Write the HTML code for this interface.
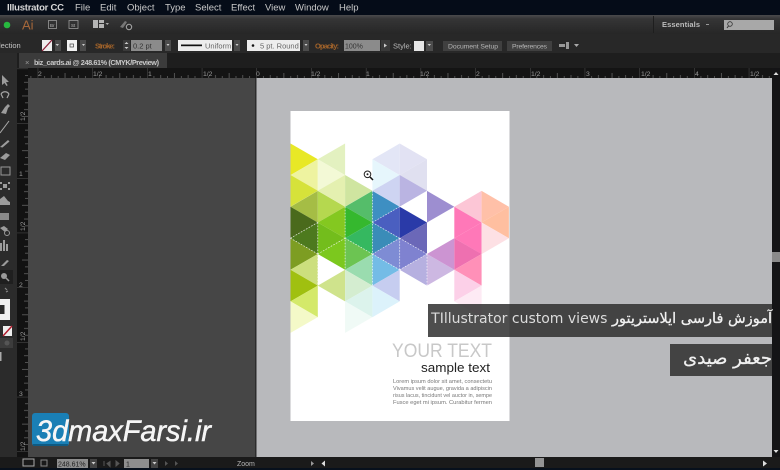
<!DOCTYPE html>
<html><head><meta charset="utf-8"><style>
html,body{margin:0;padding:0;background:#111}
#w{position:relative;width:780px;height:470px;overflow:hidden}
svg{position:absolute;left:0;top:0;display:block;filter:blur(.35px)}
svg text{font-family:"Liberation Sans",sans-serif}
.b{position:absolute;background:rgba(44,44,44,.84);color:#f0f0f0;font-family:"DejaVu Sans",sans-serif;direction:rtl;text-align:right;white-space:nowrap;overflow:visible;filter:blur(.25px)}
.a{-webkit-text-stroke:.3px #f0f0f0}
.l{font-size:14px;color:#dcdcdc;-webkit-text-stroke:0}
</style></head><body><div id="w">
<svg width="780" height="470" viewBox="0 0 780 470">
<defs>
<linearGradient id="g1" x1="0" y1="0" x2="0" y2="1"><stop offset="0" stop-color="#4a4a4c"/><stop offset=".2" stop-color="#353536"/><stop offset="1" stop-color="#262626"/></linearGradient>
<pattern id="tt" width="54.7" height="10" patternUnits="userSpaceOnUse" patternTransform="translate(256.5 68)">
<path d="M0 0v10M27.35 5v5M6.84 8v2M13.68 7v3M20.5 8v2M34.2 8v2M41 7v3M47.9 8v2" stroke="#6a6a6a" stroke-width=".7"/></pattern>
<pattern id="tl" width="11" height="54.7" patternUnits="userSpaceOnUse" patternTransform="translate(17 178)">
<path d="M0 0h11M5 27.35h6M8 6.84h3M7 13.68h4M8 20.5h3M8 34.2h3M7 41h4M8 47.9h3" stroke="#666" stroke-width=".7"/></pattern>
</defs>

<!-- base regions -->
<rect width="780" height="15" fill="#050c18"/>
<rect y="15" width="780" height="19" fill="url(#g1)"/>
<rect y="34" width="780" height="19" fill="#282828"/>
<rect y="53" width="780" height="15" fill="#1e1e1e"/>
<rect y="68" width="780" height="10" fill="#141414"/>
<rect y="68" width="780" height="10" fill="url(#tt)"/>
<rect y="53" width="17" height="417" fill="#2b2b2b"/>
<rect x="17" y="68" width="11" height="390" fill="#121212"/>
<rect x="17" y="68" width="11" height="390" fill="url(#tl)"/>
<rect x="28" y="78" width="228" height="380" fill="#464646"/>
<rect x="255" y="78" width="1.5" height="380" fill="#2c2c2c"/>
<rect x="256.5" y="78" width="516" height="380" fill="#b8b9bc"/>
<rect x="772" y="68" width="8" height="402" fill="#141416"/>
<rect y="457" width="780" height="13" fill="#1a1a1a"/>
<rect y="468" width="780" height="2" fill="#07101c"/>

<!-- menu -->
<g font-size="9.5" fill="#c9c9c9">
<text x="7" y="10.5" font-weight="bold" fill="#d8d8d8" textLength="57">Illustrator CC</text>
<text x="75" y="10.5">File</text><text x="100" y="10.5">Edit</text><text x="127" y="10.5">Object</text><text x="165" y="10.5">Type</text><text x="195" y="10.5">Select</text><text x="231" y="10.5">Effect</text><text x="265" y="10.5">View</text><text x="295" y="10.5">Window</text><text x="339" y="10.5">Help</text>
</g>

<!-- app bar -->
<circle cx="7" cy="25" r="3.3" fill="#27b83f"/>
<text x="22" y="29.5" font-size="13" fill="#a5673a">Ai</text>
<g fill="none" stroke="#9a9a9a" stroke-width=".8"><rect x="48.5" y="20.5" width="8" height="8"/><rect x="69" y="20.5" width="9" height="8"/></g>
<text x="50" y="27" font-size="4.5" fill="#bbb">Br</text><text x="71" y="27" font-size="4.5" fill="#bbb">St</text>
<path d="M93 20h5v8h-5zM99 20h5v3h-5zM99 24h5v4h-5z" fill="#b5b5b5"/><path d="M105.500 23h3.500l-1.700 2z" fill="#aaa"/>
<path d="M120 27l5-6 2 1-4 6z" fill="#777"/><circle cx="129" cy="27" r="2.700" fill="none" stroke="#aaa"/>
<path d="M653.500 16v17" stroke="#1e1e1e"/>
<text x="662" y="27" font-size="7.500" font-weight="bold" fill="#bdbdbd" textLength="38">Essentials</text>
<path d="M706 24.500h3" stroke="#999"/>
<rect x="724" y="20" width="50" height="10" fill="#a8a8a8"/>
<circle cx="730" cy="24" r="2.300" fill="none" stroke="#333" stroke-width=".8"/><path d="M728.500 26l-1.500 2" stroke="#333"/>

<!-- control bar -->
<text x="-1" y="48" font-size="7.500" fill="#c4c4c4">lection</text>
<rect x="42" y="40" width="10" height="11" fill="#eee"/><path d="M42 51l10-11" stroke="#8c1f38" stroke-width="1.300"/>
<rect x="55" y="40" width="6" height="11" fill="#4a4a4a"/><rect x="67" y="40" width="10" height="11" fill="#f2f2f2"/><rect x="70" y="44" width="3.500" height="3" fill="none" stroke="#444" stroke-width=".7"/><rect x="80" y="40" width="6" height="11" fill="#4a4a4a"/>
<text x="95" y="48.500" font-size="7.500" font-weight="bold" fill="#a2632a" textLength="20">Stroke:</text>
<rect x="123" y="40" width="7" height="11" fill="#3a3a3a"/><path d="M124.500 44l2-2 2 2zM124.500 47l2 2 2-2z" fill="#ccc"/>
<rect x="131" y="40" width="31" height="11" fill="#8b8b8b"/><text x="133" y="48.500" font-size="7.500" fill="#333">0.2 pt</text>
<rect x="165" y="40" width="6" height="11" fill="#4c4c4c"/>
<rect x="178" y="40" width="54" height="11" fill="#ededed"/><rect x="181" y="44.500" width="21" height="1.700" fill="#111"/><text x="205" y="48.500" font-size="7.500" fill="#666">Uniform</text>
<rect x="234" y="40" width="6" height="11" fill="#4c4c4c"/>
<rect x="247" y="40" width="53" height="11" fill="#ededed"/><circle cx="253" cy="45.500" r="1.300" fill="#111"/><text x="260" y="48.500" font-size="7.500" fill="#666">5 pt. Round</text>
<rect x="303" y="40" width="6" height="11" fill="#4c4c4c"/>
<text x="315" y="48.500" font-size="7.500" font-weight="bold" fill="#a2632a" textLength="24">Opacity:</text>
<rect x="344" y="40" width="36" height="11" fill="#8b8b8b"/><text x="345" y="48.500" font-size="7" fill="#333">100%</text>
<rect x="381" y="40" width="9" height="11" fill="#3a3a3a"/><path d="M384 43.500l3 2-3 2z" fill="#ccc"/>
<text x="393" y="48.500" font-size="7.500" fill="#b8b8b8">Style:</text>
<rect x="414" y="41" width="10" height="10" fill="#e6e6e6"/><rect x="426" y="41" width="7" height="10" fill="#4c4c4c"/>
<rect x="443" y="41" width="59" height="10" fill="#404040"/><text x="448" y="48.500" font-size="6.800" fill="#b5b5b5" textLength="50">Document Setup</text>
<rect x="507" y="41" width="45" height="10" fill="#404040"/><text x="512" y="48.500" font-size="6.800" fill="#b5b5b5" textLength="35">Preferences</text>
<path d="M559 44h6v3h-6zM566 42h3v7h-3z" fill="#999"/><path d="M574 44h5l-2.500 3z" fill="#aaa"/>
<path d="M55.500 44h3.500l-1.700 2zM82 44h3l-1.500 2zM166.500 44h3l-1.500 2zM235.500 44h3l-1.500 2zM304.500 44h3l-1.500 2zM427.500 44h3.500l-1.700 2z" fill="#ccc"/>

<!-- tab -->
<rect x="19" y="53" width="148" height="15" fill="#3b3b3b"/>
<text x="25" y="65" font-size="7.500" fill="#999">×</text>
<text x="34" y="65" font-size="7.300" font-weight="bold" fill="#c8c8c8" textLength="125">biz_cards.ai @ 248.61% (CMYK/Preview)</text>

<!-- ruler labels -->
<g font-size="6.800" fill="#999">
<text x="38" y="76">2</text><text x="93" y="76">1/2</text><text x="148" y="76">1</text><text x="203" y="76">1/2</text><text x="256" y="76">0</text><text x="311" y="76">1/2</text><text x="366" y="76">1</text><text x="420" y="76">1/2</text><text x="476" y="76">2</text><text x="531" y="76">1/2</text><text x="586" y="76">3</text><text x="641" y="76">1/2</text><text x="695" y="76">4</text><text x="750" y="76">1/2</text>
<text x="19" y="176">1</text><text x="19" y="287">2</text><text x="19" y="396">3</text>
<text transform="translate(25 121) rotate(-90)">1/2</text><text transform="translate(25 231) rotate(-90)">1/2</text><text transform="translate(25 341) rotate(-90)">1/2</text><text transform="translate(25 451) rotate(-90)">1/2</text>
</g>

<!-- tools -->
<g fill="#9c9c9c" stroke="none">
<path d="M2 75l0 10 2.500-2 2 3 1.200-.8-1.800-3 3-.3z"/>
<path d="M1 94c2-3 6-3 8 0M1 94l2 4M9 94l-2 4" fill="none" stroke="#a5a5a5" stroke-width="1.200"/>
<path d="M1 113l4-6 3 1-2 6zM5 107l3-3 2 2-2 2z"/>
<path d="M0 133l9-12" stroke="#aaa" fill="none"/>
<path d="M0 147l8-7 1.500 1.500-7 6z"/>
<path d="M0 158l6-5 4 2-5 5z"/>
<path d="M1 167h9v8H1z" fill="none" stroke="#999" stroke-width="1"/>
<path d="M0 182h2v2H0zM8 182h2v2H8zM0 188h2v2H0zM8 188h2v2H8zM3 184h4v4H3z"/>
<path d="M0 205v-6l4-3 4 5 2 1v3z"/>
<rect x="0" y="213" width="9" height="7" fill="#8a8a8a"/>
<path d="M0 228l4-2 4 3-3 3z"/><circle cx="7" cy="233" r="2.500" fill="none" stroke="#999"/>
<path d="M0 243h2v8H0zM3 240h2v11H3zM6 244h2v7H6z"/>
<path d="M1 266l6-6 2 1-5 5z"/>
<rect x="0" y="270" width="13" height="14" fill="#1f1f1f"/><circle cx="4" cy="276" r="3" fill="#999"/><path d="M6 278l3 3" stroke="#999" stroke-width="1.500"/>
<path d="M5 288l2 2M6 292l2-1" stroke="#888" stroke-width="1.200"/>
<rect x="0" y="299" width="10" height="21" fill="#f0f0f0"/><rect x="0" y="305" width="4.500" height="9" fill="#2a2a2a"/>
<rect x="3" y="326" width="9" height="10" fill="#eee"/><path d="M3 336l9-10" stroke="#b21d2e" stroke-width="1.500"/>
<rect x="0" y="338" width="13" height="10" fill="#3c3c3c"/><circle cx="7" cy="343" r="2.500" fill="#555"/>
<rect x="0" y="352" width="1.500" height="9" fill="#aaa"/>
</g>

<!-- artboard -->
<rect x="290.500" y="111" width="219" height="310" fill="#fff"/>
<g>
<path fill="#e8e826" d="M290.500 143.500v31.600l27.300-15.800z"/><path fill="#eef3a0" d="M317.800 159.300v31.600l-27.300-15.800z"/><path fill="#d6e23a" d="M290.500 175v31.600l27.300-15.800z"/><path fill="#a5bd45" d="M317.800 190.900v31.600l-27.300-15.800z"/><path fill="#4a6a1c" d="M290.500 206.700v31.600l27.300-15.800z"/><path fill="#4d7a1e" d="M317.800 222.500v31.600l-27.300-15.800z"/><path fill="#7d9d22" d="M290.500 238.200v31.600l27.300-15.800z"/><path fill="#ccdf7e" d="M317.800 254v31.600l-27.300-15.800z"/><path fill="#a0c010" d="M290.500 269.800v31.600l27.300-15.800z"/><path fill="#d4e96a" d="M317.800 285.600v31.600l-27.300-15.800z"/><path fill="#f4f9c8" d="M290.500 301.300v31.600l27.300-15.800z"/>
<path fill="#e3f1c0" d="M345.100 143.500v31.600l-27.300-15.800z"/><path fill="#f3f9d6" d="M317.800 159.300v31.600l27.300-15.800z"/><path fill="#e4f0b0" d="M345.100 175v31.600l-27.300-15.800z"/><path fill="#b5d84f" d="M317.800 190.900v31.600l27.300-15.800z"/><path fill="#84c820" d="M345.100 206.700v31.600l-27.300-15.800z"/><path fill="#73bd1c" d="M317.800 222.500v31.600l27.300-15.800z"/><path fill="#7cc81e" d="M345.100 238.200v31.600l-27.300-15.800z"/><path fill="#cfe38c" d="M345.100 269.800v31.600l-27.300-15.800z"/>
<path fill="#cfe5a0" d="M345.100 175v31.600l27.300-15.800z"/><path fill="#55bd6a" d="M372.400 190.900v31.600l-27.300-15.800z"/><path fill="#35b82e" d="M345.100 206.700v31.600l27.300-15.800z"/><path fill="#35b860" d="M372.400 222.500v31.600l-27.300-15.800z"/><path fill="#6cc452" d="M345.100 238.200v31.600l27.300-15.800z"/><path fill="#9adcaf" d="M372.400 254v31.600l-27.300-15.800z"/><path fill="#d4edd0" d="M345.100 269.800v31.600l27.300-15.800z"/><path fill="#dcf3ec" d="M372.400 285.600v31.600l-27.300-15.800z"/><path fill="#f0faf6" d="M345.100 301.300v31.600l27.300-15.800z"/>
<path fill="#e3e6f6" d="M399.700 143.500v31.600l-27.300-15.800z"/><path fill="#e6f6fc" d="M372.400 159.300v31.600l27.300-15.800z"/><path fill="#ced4f2" d="M399.700 175v31.600l-27.300-15.800z"/><path fill="#3e8fc2" d="M372.400 190.900v31.600l27.300-15.800z"/><path fill="#4a5fc0" d="M399.700 206.700v31.600l-27.300-15.800z"/><path fill="#3a8cb8" d="M372.400 222.500v31.600l27.300-15.800z"/><path fill="#7e8cd4" d="M399.700 238.200v31.600l-27.300-15.800z"/><path fill="#74bce6" d="M372.400 254v31.600l27.300-15.800z"/><path fill="#c6cdf0" d="M399.700 269.800v31.600l-27.300-15.800z"/><path fill="#dcf2fb" d="M372.400 285.600v31.600l27.300-15.800z"/>
<path fill="#e2e2f3" d="M399.700 143.500v31.600l27.300-15.800z"/><path fill="#e0e0f0" d="M427 159.300v31.600l-27.300-15.800z"/><path fill="#bab4e2" d="M399.700 175v31.600l27.300-15.800z"/><path fill="#2a3aa8" d="M399.700 206.700v31.600l27.300-15.800z"/><path fill="#6b68b8" d="M427 222.500v31.600l-27.300-15.800z"/><path fill="#7f82d0" d="M399.700 238.200v31.600l27.300-15.800z"/><path fill="#b6b0e0" d="M427 254v31.600l-27.300-15.800z"/>
<path fill="#9d8ed0" d="M427 190.900v31.600l27.300-15.800z"/><path fill="#cdb8e2" d="M427 254v31.600l27.300-15.800z"/><path fill="#cc94d2" d="M454.300 238.200v31.600l-27.300-15.800z"/>
<path fill="#fcc6d6" d="M481.600 190.900v31.600l-27.300-15.800z"/><path fill="#ff78b8" d="M454.300 206.700v31.600l27.300-15.800z"/><path fill="#ff78b8" d="M481.600 222.500v31.600l-27.300-15.800z"/><path fill="#ee70b0" d="M454.300 238.200v31.600l27.300-15.800z"/><path fill="#ff90b8" d="M481.600 254v31.600l-27.300-15.800z"/><path fill="#fcd0e8" d="M454.300 269.800v31.600l27.300-15.800z"/><path fill="#fdeaf4" d="M481.600 285.600v31.600l-27.300-15.800z"/>
<path fill="#ffc0a8" d="M481.600 190.900v31.600l27.300-15.800z"/><path fill="#ffbfa0" d="M508.900 206.700v31.600l-27.300-15.800z"/><path fill="#fde0e4" d="M481.600 222.500v31.600l27.300-15.800z"/>
<path d="M290.500 238.200l27.300-15.800M290.500 238.200l27.300 15.800M317.800 222.500v63M317.800 254l27.300-15.800M345.100 206.700v63M345.100 238.200l27.300 15.800M372.400 190.900v94.700M372.400 222.500l27.300-15.800M372.400 254l27.300-15.800M372.400 222.500l27.300 15.800M399.700 238.200v31.600M399.700 238.200l27.300 15.800M372.400 254l27.300 15.800M427 254l-27.300 15.800M427 254v31.600" stroke="#fff" stroke-width=".7" stroke-dasharray="1.500 1.500" fill="none" opacity=".85"/>
</g>
<circle cx="367.500" cy="174.300" r="3.300" fill="#fff" stroke="#222"/><circle cx="367.500" cy="174.300" r="1" fill="#222"/><path d="M370 177l3 3" stroke="#111" stroke-width="1.500"/>

<text x="392" y="357" font-size="19.500" fill="#c8c8c8" textLength="100" lengthAdjust="spacingAndGlyphs">YOUR TEXT</text>
<text x="421" y="372" font-size="13" fill="#222" textLength="69" lengthAdjust="spacingAndGlyphs">sample text</text>
<g font-size="5.400" fill="#777">
<text x="393" y="383" textLength="99" lengthAdjust="spacingAndGlyphs">Lorem ipsum dolor sit amet, consectetu</text>
<text x="393" y="390" textLength="99" lengthAdjust="spacingAndGlyphs">Vivamus velit augue, gravida a adipiscin</text>
<text x="393" y="397" textLength="99" lengthAdjust="spacingAndGlyphs">risus lacus, tincidunt vel auctor in, sempe</text>
<text x="393" y="404" textLength="99" lengthAdjust="spacingAndGlyphs">Fusce eget mi ipsum. Curabitur fermen</text>
</g>

<!-- status bar -->
<rect x="23" y="459" width="11" height="7" fill="none" stroke="#aaa"/><rect x="41" y="460" width="6" height="6" fill="none" stroke="#888"/>
<rect x="57" y="459" width="31" height="9" fill="#8e8e8e"/><text x="58" y="466.500" font-size="7" fill="#222">248.61%</text>
<rect x="90" y="459" width="7" height="9" fill="#444"/><path d="M91.500 462h4l-2 2.500z" fill="#ccc"/>
<path d="M104 461v5M107 463.500l3-2v5zM116 461l3 2.500-3 2.500z" fill="#555" stroke="#555"/>
<rect x="124" y="459" width="25" height="9" fill="#8e8e8e"/><text x="126" y="466.500" font-size="7" fill="#222">1</text>
<rect x="151" y="459" width="7" height="9" fill="#444"/><path d="M152.500 462h4l-2 2.500z" fill="#ccc"/>
<path d="M165 461l3 2.500-3 2.500zM175 461l3 2.500-3 2.500z" fill="#555"/>
<text x="237" y="466" font-size="7" fill="#b5b5b5">Zoom</text>
<path d="M311 461l3 2.500-3 2.500z" fill="#999"/><path d="M325 460.500l-3.500 3 3.500 3z" fill="#ddd"/>
<rect x="535" y="458" width="9" height="9" fill="#949494"/>
<path d="M763 460.500l4 3-4 3z" fill="#ddd"/>
<rect x="772" y="252" width="8" height="10" fill="#8a8a8a"/>
<path d="M773.500 75l2.500-3 2.500 3z" fill="#ddd"/><path d="M773.500 450h5l-2.500 3z" fill="#ddd"/>

<!-- logo -->
<rect x="32" y="413" width="37" height="33" rx="3" fill="#1a7fb5"/>
<rect x="33" y="444" width="35" height="2" fill="#0f5a82"/>
<text x="36" y="441" font-size="30" font-style="italic" fill="#f6f6f6" stroke="#f6f6f6" stroke-width=".5" textLength="175" lengthAdjust="spacingAndGlyphs">3dmaxFarsi.ir</text>
</svg>
<div class="b a" style="left:428px;top:304px;width:344px;height:32.500px;font-size:14.500px;line-height:31px">آموزش فارسی ایلاستریتور <span class="l">TIllustrator custom views</span></div>
<div class="b a" style="left:670px;top:343.500px;width:102px;height:32.500px;font-size:18px;line-height:30px">جعفر صیدی</div>
</div></body></html>
